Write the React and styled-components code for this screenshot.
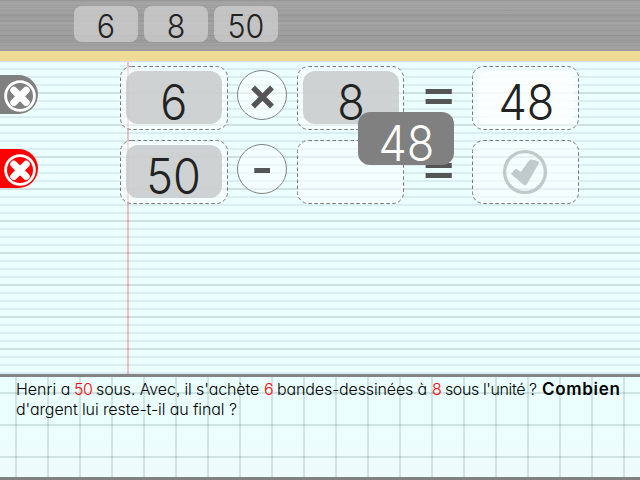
import React from "react";
import styled, { createGlobalStyle, css } from "styled-components";

const Global = createGlobalStyle`
  *{box-sizing:border-box}
  body{margin:0;overflow:hidden;font-family:Inter,"Liberation Sans",sans-serif;color:#222}
`;
const Page = styled.div`
  width:640px;height:480px;display:flex;flex-direction:column;overflow:hidden;
`;
const Header = styled.header`
  height:51px;flex:none;display:flex;gap:6px;padding:6px 0 0 74px;
  background:
    repeating-linear-gradient(180deg,rgba(0,0,0,.035) 0 1px,transparent 1px 3px,rgba(255,255,255,.04) 3px 4px,transparent 4px 5px),
    repeating-linear-gradient(180deg,rgba(0,0,0,.035) 0 1px,transparent 1px 7px),
    linear-gradient(#a0a0a0,#a4a4a4 12%,#9c9c9c 32%,#a2a2a2 45%,#a0a0a0 60%,#9b9b9b 75%,#a3a3a3);
`;
const Digits = styled.span`
  display:block;font-family:Inter,sans-serif;font-weight:300;white-space:nowrap;
  font-size:${p => p.$size}px;line-height:1;
  transform:scaleX(.92);
`;
const HeadTile = styled.div`
  width:64px;height:36px;border-radius:8px;background:rgba(211,211,211,.7);
  display:flex;justify-content:center;padding-top:4px;
`;
const Wood = styled.div`height:11px;flex:none;background:#eedc96;border-bottom:1px solid #d8e2e6;`;
const Sheet = styled.main`
  height:312px;flex:none;padding-top:4px;display:flex;flex-direction:column;gap:10px;
  background:
    linear-gradient(rgba(255,0,0,.25),rgba(255,0,0,.25)) 127px 0/2px 100% no-repeat,
    repeating-linear-gradient(180deg,transparent 0 30px,#cfe0e0 30px 32px),
    repeating-linear-gradient(180deg,transparent 0 6px,#d9eef2 6px 8px),
    #ebffff;
`;
const Row = styled.div`
  height:64px;display:grid;align-items:start;
  grid-template-columns:120px 108px 69px 108px 67px 108px;
`;
const Tab = styled.div`
  width:38px;height:39px;margin-top:9px;border-radius:0 20px 20px 0;
  background:${p => p.$active ? "#f00" : "#808080"};
  display:flex;align-items:center;padding-left:4px;
`;
const Slot = styled.div`height:64px;width:108px;position:relative;padding:5px 6px;`;
const Outline = styled.svg`position:absolute;inset:0;`;
const Tile = styled.div`
  position:relative;width:96px;height:53px;border-radius:12px;display:flex;justify-content:center;padding-top:7px;
  ${p => p.$kind === "gray" && css`background:rgba(196,199,199,.8);`}
  ${p => p.$kind === "white" && css`background:rgba(255,255,255,.6);`}
  ${p => p.$kind === "drag" && css`background:#808080;color:#fff;position:absolute;left:358px;top:112px;`}
`;
const Operator = styled.div`
  width:50px;height:50px;margin:4px 0 0 9px;border:1px solid #808080;border-radius:50%;
  background:rgba(255,255,255,.5);
  svg{display:block}
`;
const Equals = styled.svg`margin:21px 0 0 20px;display:block;`;
const Check = styled.svg`position:relative;display:block;margin:4px 0 0 24px;`;
const Problem = styled.footer`
  height:106px;flex:none;border-top:3px solid #848484;border-bottom:3px solid #808080;padding:2px 0 0 16px;
  background:
    repeating-linear-gradient(90deg,transparent 0 15px,rgba(0,40,40,.12) 15px 17px,transparent 17px 32px),
    repeating-linear-gradient(180deg,transparent 0 15px,rgba(0,40,40,.12) 15px 17px,transparent 17px 32px),
    linear-gradient(#ebffff 40%,#edfcf9);
  font-size:16px;line-height:20px;color:#000;font-feature-settings:"cv11","ss03";
`;
const Line = styled.div`display:flex;height:20px;white-space:pre;`;
const Part = styled.span`
  width:${p => p.$w}px;flex:none;letter-spacing:${p => p.$ls || 0}px;
  color:${p => p.$red ? "#f00" : "inherit"};font-weight:${p => p.$bold ? 600 : 320};
  font-size:${p => p.$bold ? 17 : 16}px;
`;

const Dashed = ({ w = 108, fill = .5 }) => (
  <Outline width={w} height="64">
    <rect x=".5" y=".5" width={w - 1} height="63" rx="11" fill="#fff" fillOpacity={fill} stroke="#777" strokeDasharray="3.5 2.5" />
  </Outline>
);
const Cancel = () => (
  <svg width="32" height="34" viewBox="0 0 32 34">
    <circle cx="16" cy="18" r="14.4" fill="none" stroke="#fff" strokeWidth="2.8" />
    <path d="M9.8 12.2L22.2 24.4M22.2 12.2L9.8 24.4" stroke="#fff" strokeWidth="7" strokeLinecap="round" />
  </svg>
);
const Equal = () => (
  <Equals width="28" height="18"><path d="M.6 2h26.2v5H.6zM.6 12h26.2v5H.6z" fill="#555" /></Equals>
);

export default function App() {
  return (
    <Page>
      <Global />
      <Header>{["6", "8", "50"].map(n => <HeadTile key={n}><Digits $size={33}>{n}</Digits></HeadTile>)}</Header>
      <Wood />
      <Sheet>
        <Row>
          <Tab><Cancel /></Tab>
          <Slot><Dashed /><Tile $kind="gray"><Digits $size={49}>6</Digits></Tile></Slot>
          <Operator><svg width="48" height="48"><path d="M15 16.500L34 35.500M34 16.500L15 35.500" stroke="#555" strokeWidth="5.4" /></svg></Operator>
          <Slot><Dashed w={107} /><Tile $kind="gray"><Digits $size={49}>8</Digits></Tile></Slot>
          <Equal />
          <Slot><Dashed w={107} /><Tile $kind="white"><Digits $size={49}>48</Digits></Tile></Slot>
        </Row>
        <Row>
          <Tab $active><Cancel /></Tab>
          <Slot><Dashed /><Tile $kind="gray"><Digits $size={49}>50</Digits></Tile></Slot>
          <Operator><svg width="48" height="48"><path d="M16.300 23h15.700v5H16.300z" fill="#555" /></svg></Operator>
          <Slot><Dashed w={107} /></Slot>
          <Equal />
          <Slot><Dashed w={107} />
            <Check width="46" height="46">
              <circle cx="23" cy="23" r="20.4" fill="none" stroke="#c0caca" strokeWidth="3.4" />
              <path d="M9.500 25L14 20L19 23.500L27.500 11.500Q28 11 29 11L36 12.500Q37 13 36.500 14L24.500 35Q23.500 36.500 22 35.500Z" fill="#c0caca" strokeLinejoin="round" stroke="#c0caca" />
            </Check>
          </Slot>
        </Row>
      </Sheet>
      <Problem>
        <Line>
          <Part $w={58}>Henri a</Part><Part $w={22} $red $ls={-0.4}>50</Part><Part $w={168} $ls={-0.12}>sous. Avec, il s'achète</Part>
          <Part $w={13} $red>6</Part><Part $w={155} $ls={-0.14}>bandes-dessinées à</Part><Part $w={13} $red>8</Part>
          <Part $w={97} $ls={-0.4}>sous l'unité ?</Part><Part $w={80} $bold $ls={0.7}>Combien</Part>
        </Line>
        <Line><Part $w={300} $ls={-0.1}>d'argent lui reste-t-il au final ?</Part></Line>
      </Problem>
      <Tile $kind="drag"><Digits $size={49}>48</Digits></Tile>
    </Page>
  );
}
